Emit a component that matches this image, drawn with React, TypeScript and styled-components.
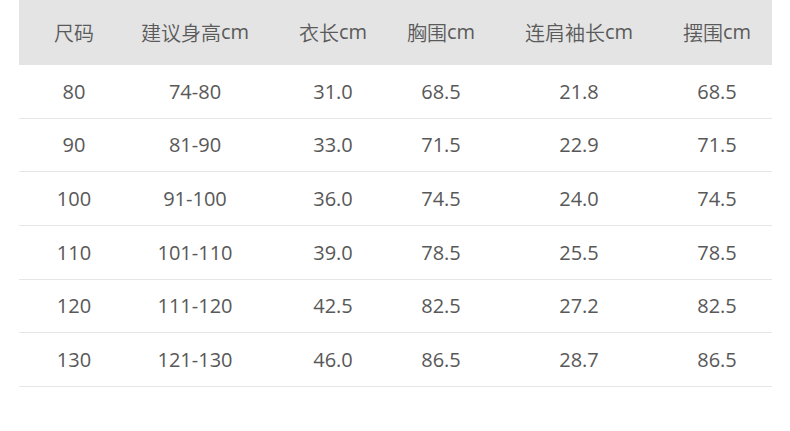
import styled, { createGlobalStyle } from "styled-components";

const GlobalStyle = createGlobalStyle`
  html, body {
    margin: 0;
    padding: 0;
    background: #ffffff;
  }
  body {
    font-family: "Open Sans", "Noto Sans CJK SC", sans-serif;
  }
`;

// label + unit, unit rendered in regular weight
const header: [string, string][] = [
  ["尺码", ""],
  ["建议身高", "cm"],
  ["衣长", "cm"],
  ["胸围", "cm"],
  ["连肩袖长", "cm"],
  ["摆围", "cm"],
];

const rows = [
  ["80", "74-80", "31.0", "68.5", "21.8", "68.5"],
  ["90", "81-90", "33.0", "71.5", "22.9", "71.5"],
  ["100", "91-100", "36.0", "74.5", "24.0", "74.5"],
  ["110", "101-110", "39.0", "78.5", "25.5", "78.5"],
  ["120", "111-120", "42.5", "82.5", "27.2", "82.5"],
  ["130", "121-130", "46.0", "86.5", "28.7", "86.5"],
];

const App = () => {
  return (
    <>
      <GlobalStyle />
      <Page>
        <SizeTable>
          <HeadRow>
            {header.map(([label, unit]) => (
              <Cell key={label}>
                {label}
                {unit && <Unit>{unit}</Unit>}
              </Cell>
            ))}
          </HeadRow>
          {rows.map((r) => (
            <BodyRow key={r[0]}>
              {r.map((v, i) => (
                <Cell key={i}>{v}</Cell>
              ))}
            </BodyRow>
          ))}
        </SizeTable>
      </Page>
    </>
  );
};

export default App;

const Page = styled.div`
  width: 790px;
  height: 431px;
  padding-left: 19px;
  box-sizing: border-box;
  overflow: hidden;
`;

const SizeTable = styled.div`
  width: 753px;
  display: flex;
  flex-direction: column;
`;

const Row = styled.div`
  display: grid;
  grid-template-columns: 110px 132px 144px 72px 204px 91px;
  align-items: center;
  box-sizing: border-box;
  font-size: 20px;
`;

const HeadRow = styled(Row)`
  height: 65px;
  background: #e4e4e4;
  color: #5a5a5a;
  font-weight: 350;
`;

const BodyRow = styled(Row)`
  height: 53.67px;
  color: #585858;
  border-bottom: 1px solid #e6e6e6;
`;

const Cell = styled.div`
  display: flex;
  justify-content: center;
  white-space: nowrap;
  &:last-child {
    padding-right: 19px;
  }
`;

const Unit = styled.span`
  font-weight: 400;
`;
